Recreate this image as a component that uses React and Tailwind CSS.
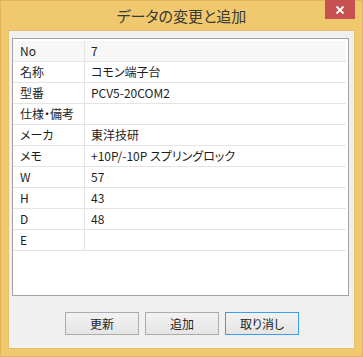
const rows = [
  ["No", "7"],
  ["名称", "コモン端子台"],
  ["型番", "PCV5-20COM2"],
  ["仕様・備考", ""],
  ["メーカ", "東洋技研"],
  ["メモ", "+10P/-10P スプリングロック"],
  ["W", "57"],
  ["H", "43"],
  ["D", "48"],
  ["E", ""],
]

export default function App() {
  return (
    <div className="w-[363px] h-[357px] bg-[#f0c86d] border border-[#e2b658] flex flex-col font-['Noto_Sans_CJK_JP',sans-serif] [font-feature-settings:'palt'] text-[#1e1e1e]">
      {/* Title bar */}
      <div className="flex h-[29px] shrink-0">
        <div className="w-[37px]" />
        <div className="flex-1 text-center text-[15px] leading-[30px] text-[#3a3a3a]">データの変更と追加</div>
        <div className="w-[30px] h-[19px] mr-[7px] -mt-[1px] bg-[#c75050] flex items-center justify-center">
          <svg width="10" height="10" viewBox="0 0 10 10">
            <path d="M1.5 1.5 L8.5 8.5 M8.5 1.5 L1.5 8.5" stroke="#fff" strokeWidth="1.8" />
          </svg>
        </div>
      </div>

      {/* Client area */}
      <div className="mx-[7px] mb-[7px] flex-1 bg-[#f0f0f0] border border-[#e6bf68] flex flex-col pt-[7px] pl-[3px] pr-[5px]">
        <div className="h-[258px] bg-white border border-[#a3a3a3] pt-[2px] pr-[2px]">
          {rows.map(([label, value], i) => (
            <div
              key={label}
              className={`flex h-[21px] border-b border-[#e4e4e4] text-[12px] leading-[20px] ${i === 0 ? "bg-[#f7f7f7]" : "bg-white"}`}
            >
              <div className="w-[72px] border-r border-[#e4e4e4] pl-[7px]">{label}</div>
              <div className="flex-1 pl-[6px]">{value}</div>
            </div>
          ))}
        </div>

        <div className="flex justify-center gap-[6px] mt-[16px] pl-[3px]">
          <button className="w-[74px] h-[23px] text-[12px] border border-[#acacac] bg-gradient-to-b from-[#f2f2f2] to-[#e5e5e5]">更新</button>
          <button className="w-[74px] h-[23px] text-[12px] border border-[#acacac] bg-gradient-to-b from-[#f2f2f2] to-[#e5e5e5]">追加</button>
          <button className="w-[74px] h-[23px] text-[12px] border border-[#3c9cf0] bg-gradient-to-b from-[#f2f2f2] to-[#e5e5e5]">取り消し</button>
        </div>
      </div>
    </div>
  )
}
